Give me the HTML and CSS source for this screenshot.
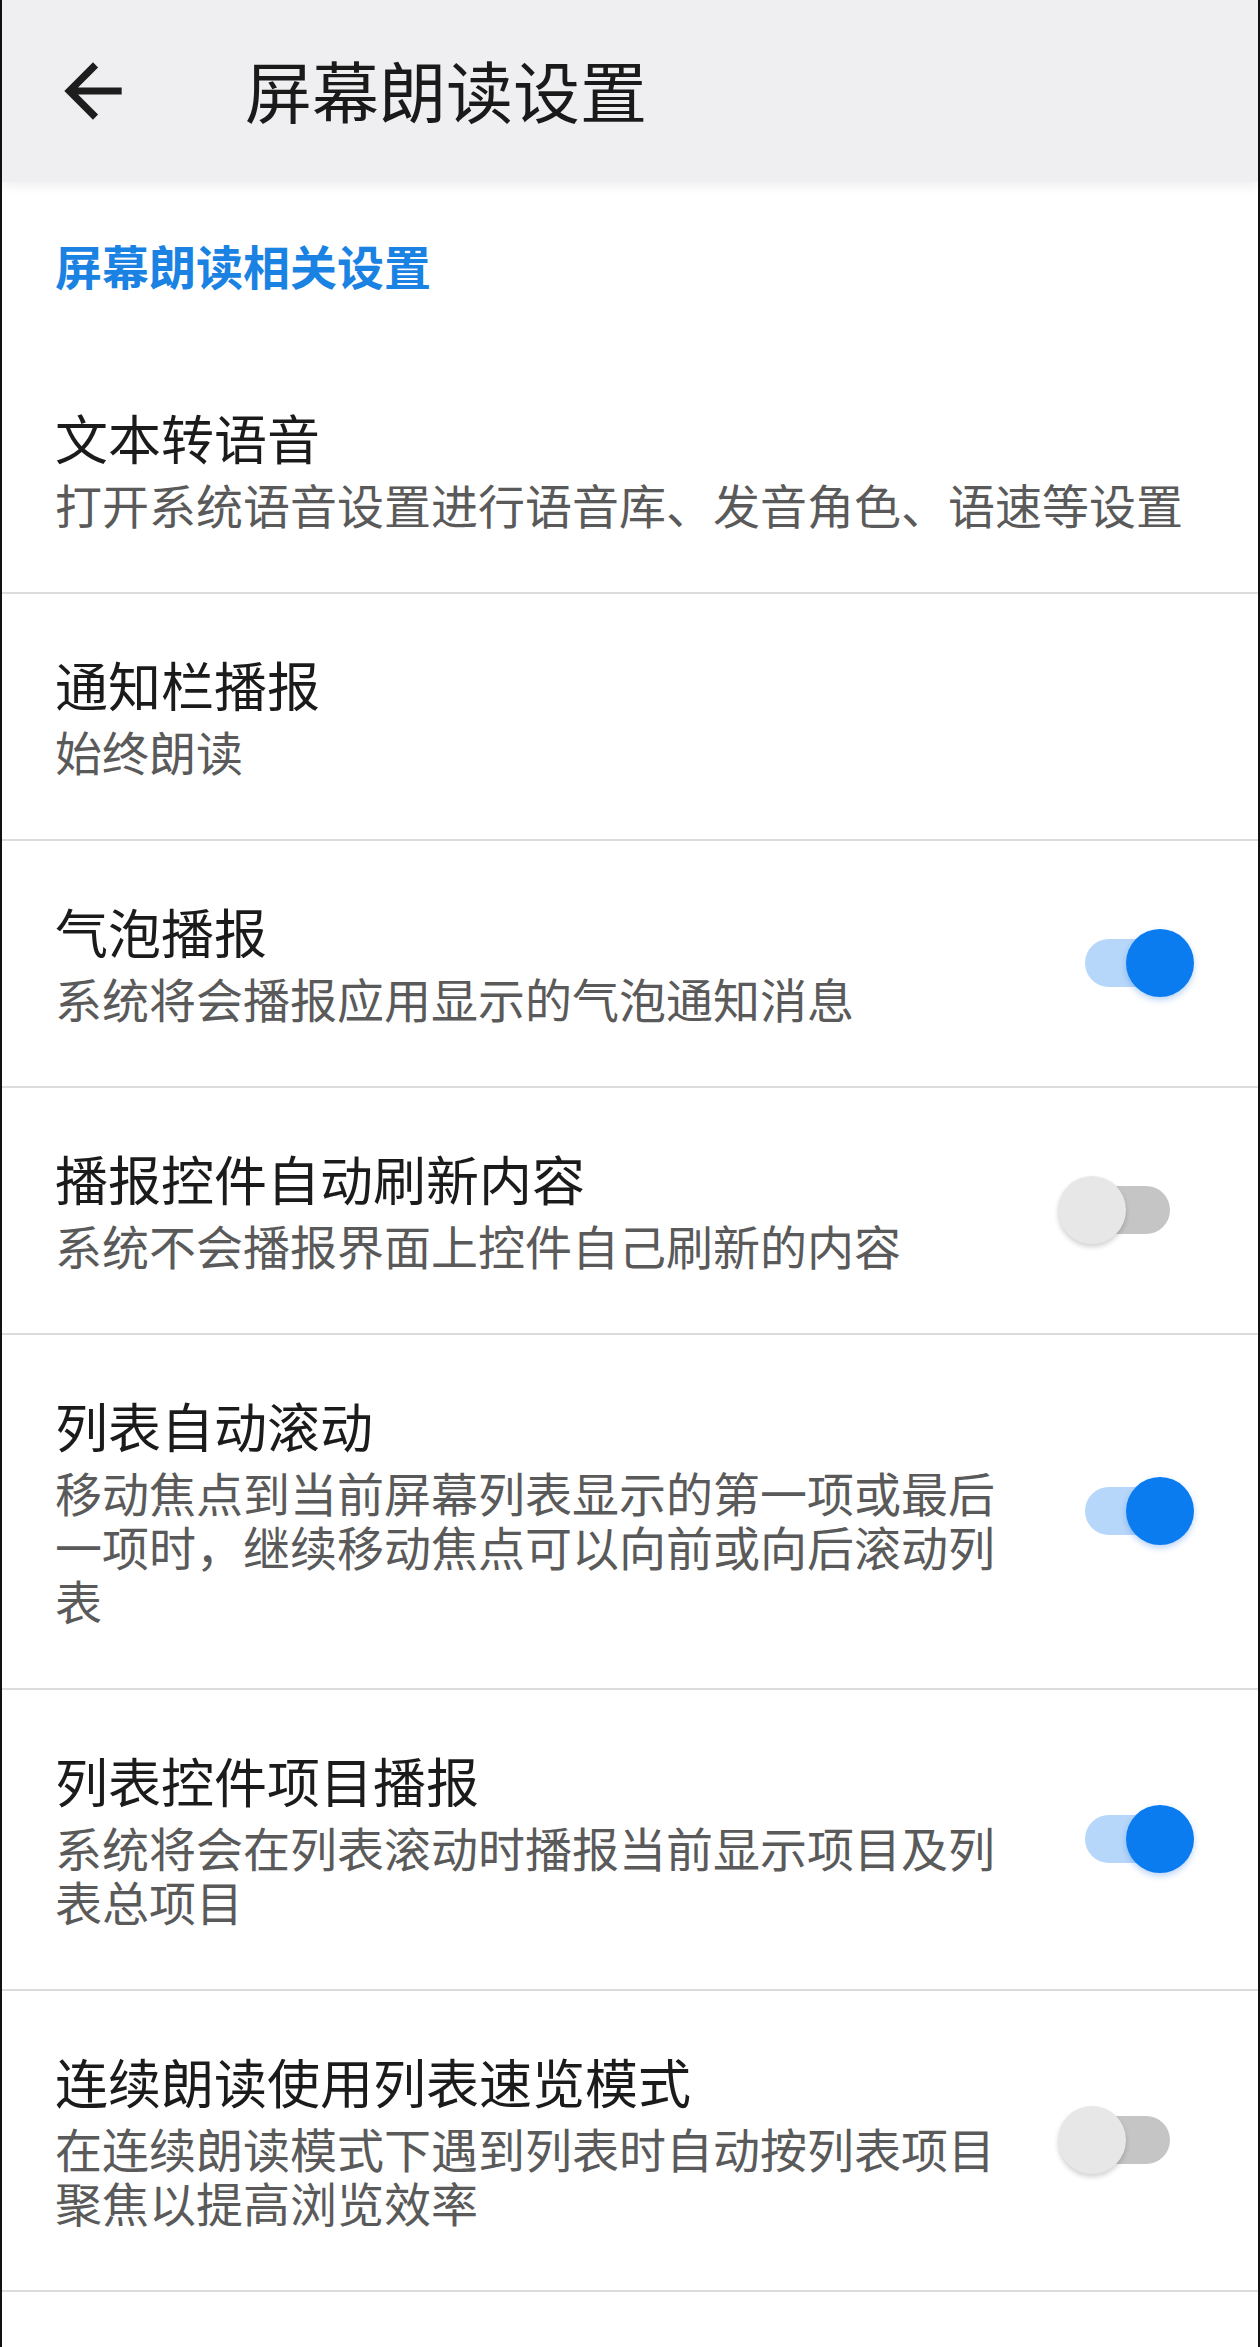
FILE: index.html
```html
<!DOCTYPE html>
<html lang="zh-CN">
<head>
<meta charset="utf-8">
<title>屏幕朗读设置</title>
<link rel="stylesheet" href="styles.css">
</head>
<body>
<div class="frame">
  <header class="appbar">
    <svg class="back" viewBox="0 0 24 24" aria-hidden="true"><path d="M20 11H7.83l5.59-5.59L12 4l-8 8 8 8 1.41-1.41L7.83 13H20v-2z"/></svg>
    <h1 class="appbar-title">屏幕朗读设置</h1>
  </header>
  <main class="content">
    <div class="section-title">屏幕朗读相关设置</div>
    <div class="item item-first">
      <div class="text">
        <div class="title">文本转语音</div>
        <div class="summary">打开系统语音设置进行语音库、发音角色、语速等设置</div>
      </div>
    </div>
    <div class="item">
      <div class="text">
        <div class="title">通知栏播报</div>
        <div class="summary">始终朗读</div>
      </div>
    </div>
    <div class="item">
      <div class="text">
        <div class="title">气泡播报</div>
        <div class="summary">系统将会播报应用显示的气泡通知消息</div>
      </div>
      <div class="switch on"><span class="track"></span><span class="thumb"></span></div>
    </div>
    <div class="item">
      <div class="text">
        <div class="title">播报控件自动刷新内容</div>
        <div class="summary">系统不会播报界面上控件自己刷新的内容</div>
      </div>
      <div class="switch"><span class="track"></span><span class="thumb"></span></div>
    </div>
    <div class="item">
      <div class="text">
        <div class="title">列表自动滚动</div>
        <div class="summary">移动焦点到当前屏幕列表显示的第一项或最后一项时，继续移动焦点可以向前或向后滚动列表</div>
      </div>
      <div class="switch on"><span class="track"></span><span class="thumb"></span></div>
    </div>
    <div class="item">
      <div class="text">
        <div class="title">列表控件项目播报</div>
        <div class="summary">系统将会在列表滚动时播报当前显示项目及列表总项目</div>
      </div>
      <div class="switch on"><span class="track"></span><span class="thumb"></span></div>
    </div>
    <div class="item">
      <div class="text">
        <div class="title">连续朗读使用列表速览模式</div>
        <div class="summary">在连续朗读模式下遇到列表时自动按列表项目聚焦以提高浏览效率</div>
      </div>
      <div class="switch"><span class="track"></span><span class="thumb"></span></div>
    </div>
  </main>
</div>
</body>
</html>
```
FILE: styles.css
```css
html, body {
  margin: 0;
  padding: 0;
  background: #ffffff;
}
body {
  font-family: "Noto Sans CJK SC", "Noto Sans", sans-serif;
  color: #1b1b1b;
}
.frame {
  width: 1256px;
  min-height: 2347px;
  border-left: 2px solid #111;
  border-right: 2px solid #111;
  background: #fff;
  box-sizing: content-box;
}
.appbar {
  height: 182px;
  background: #efeff1;
  display: flex;
  align-items: center;
  box-shadow: 0 5px 10px rgba(0, 0, 0, 0.06);
  position: relative;
  z-index: 1;
}
.back {
  width: 86px;
  height: 86px;
  margin-left: 48px;
  fill: #1d1d1d;
  flex: none;
}
.appbar-title {
  margin: 0 0 4px 109px;
  font-size: 67px;
  font-weight: 400;
  line-height: 80px;
  color: #1a1a1a;
}
.content {
  display: flex;
  flex-direction: column;
}
.section-title {
  padding: 53px 0 0 53px;
  font-size: 47px;
  font-weight: 700;
  line-height: 60px;
  color: #1a82e2;
}
.item {
  display: flex;
  align-items: center;
  gap: 43px;
  padding: 59px 62px 61px 53px;
  border-bottom: 2px solid #dcdcdc;
}
.item-first {
  padding-top: 111px;
}
.text {
  flex: 1;
  min-width: 0;
  display: flex;
  flex-direction: column;
  gap: 9px;
}
.title {
  font-size: 53px;
  line-height: 62px;
  color: #1b1b1b;
}
.summary {
  font-size: 47px;
  line-height: 54px;
  color: #5a5a5a;
}
.switch {
  flex: none;
  width: 138px;
  height: 70px;
  position: relative;
}
.track {
  position: absolute;
  left: 12px;
  top: 11px;
  width: 100px;
  height: 48px;
  border-radius: 24px;
  background: #c5c5c5;
}
.thumb {
  position: absolute;
  left: 0;
  top: 1px;
  width: 68px;
  height: 68px;
  border-radius: 50%;
  background: #e7e7e7;
  box-shadow: 0 3px 5px rgba(0, 0, 0, 0.18);
}
.switch.on .track {
  left: 27px;
  background: #b7d7fa;
}
.switch.on .thumb {
  left: auto;
  right: 2px;
  background: #0a7cf0;
  box-shadow: 0 3px 6px rgba(10, 100, 220, 0.28);
}
```
